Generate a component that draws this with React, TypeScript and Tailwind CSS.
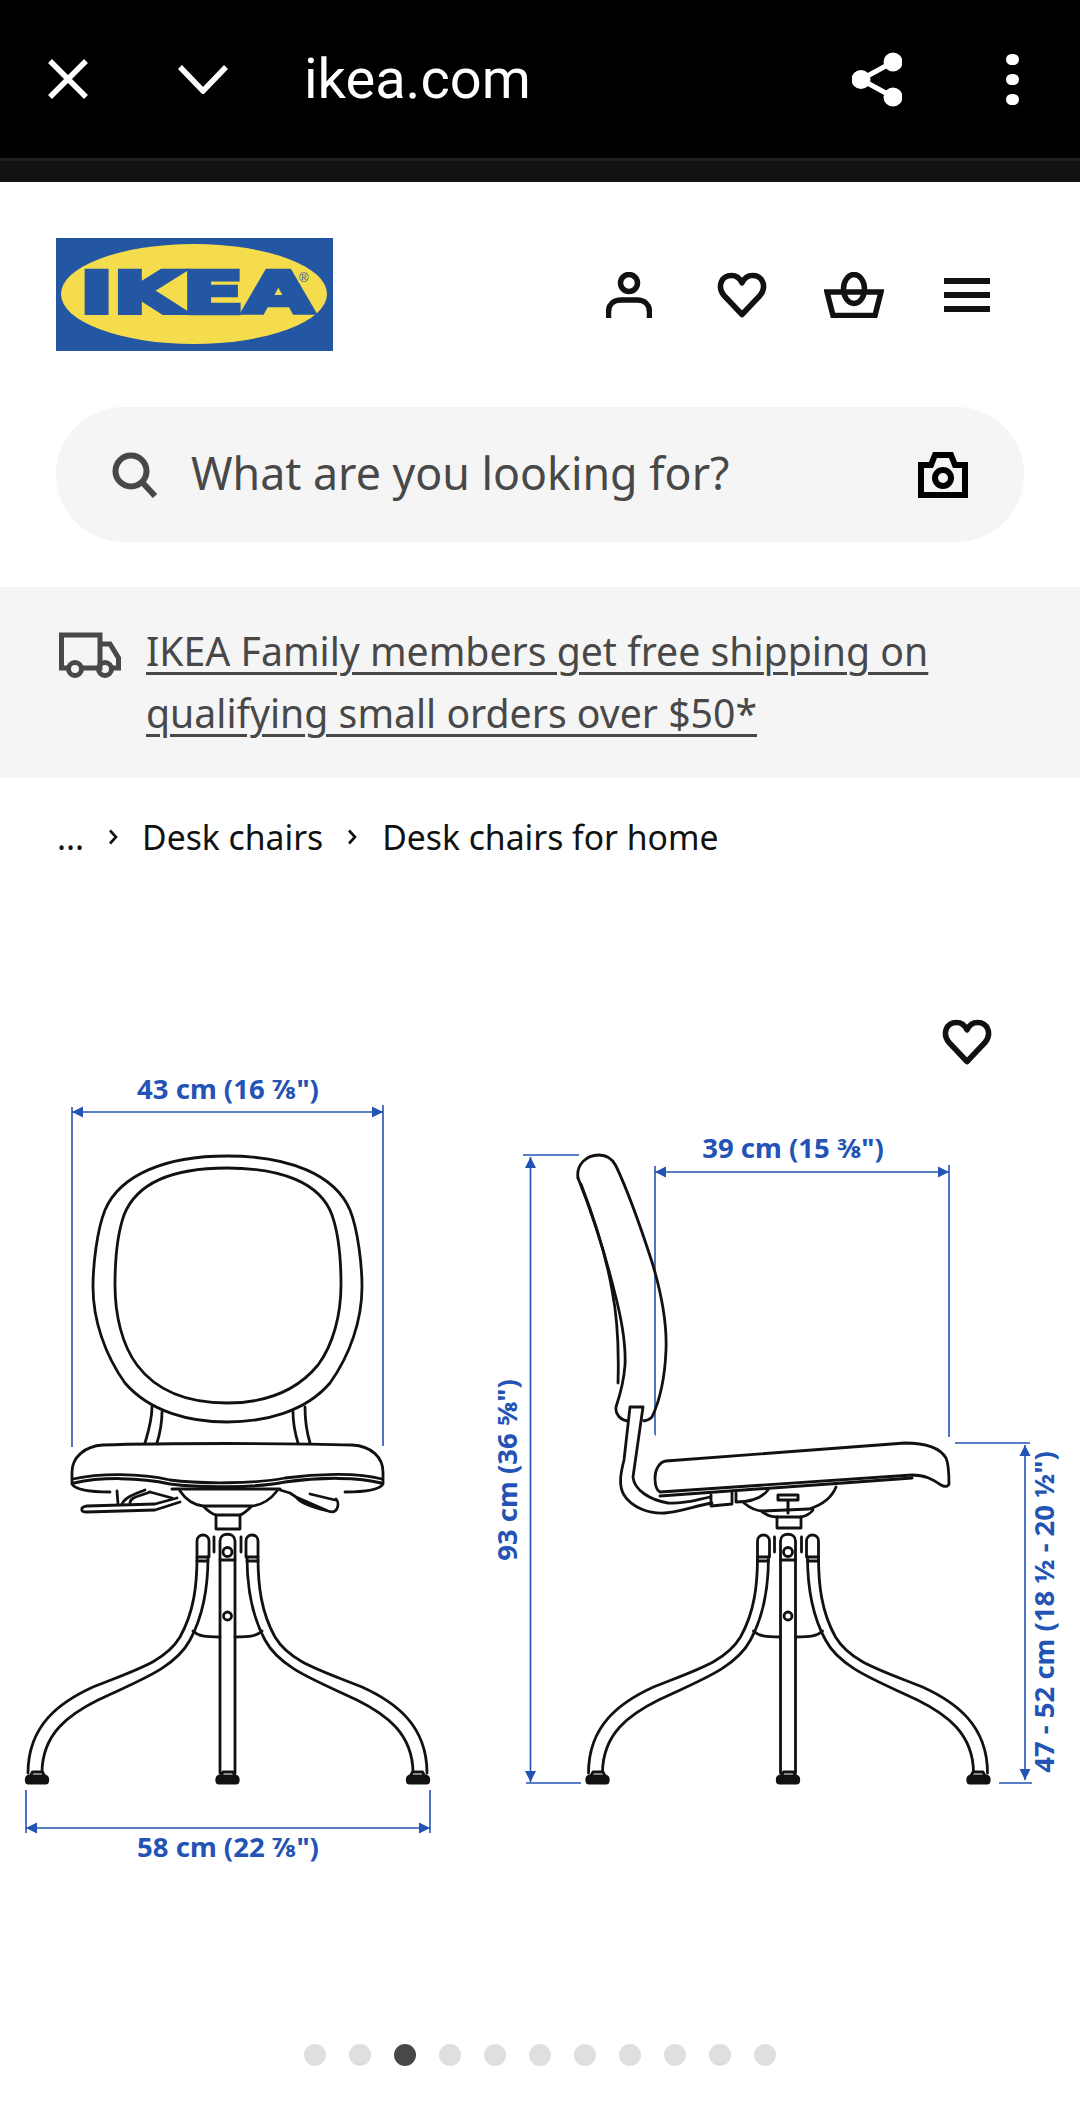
import React from 'react';

const BLUE = '#2353b5';
const INK = '#111111';

const HeartIcon: React.FC<{ className?: string }> = ({ className }) => (
  <svg viewBox="0 0 50 46" className={className} fill="none" stroke={INK} strokeWidth="5.5" strokeLinejoin="round">
    <path d="M25 42.5 L7 23.5 C0 15 4 3.5 14.5 3.5 C19.5 3.5 23 6.5 25 11 C27 6.5 30.5 3.5 35.5 3.5 C46 3.5 50 15 43 23.5 Z" />
  </svg>
);

const Dim: React.FC<{ x1: number; y1: number; x2: number; y2: number }> = ({ x1, y1, x2, y2 }) => (
  <line x1={x1} y1={y1} x2={x2} y2={y2} stroke={BLUE} strokeWidth="1.6" />
);

const ArrowH: React.FC<{ x1: number; x2: number; y: number }> = ({ x1, x2, y }) => (
  <g fill={BLUE}>
    <line x1={x1} y1={y} x2={x2} y2={y} stroke={BLUE} strokeWidth="1.6" />
    <polygon points={`${x1},${y} ${x1 + 11},${y - 5.5} ${x1 + 11},${y + 5.5}`} />
    <polygon points={`${x2},${y} ${x2 - 11},${y - 5.5} ${x2 - 11},${y + 5.5}`} />
  </g>
);

const ArrowV: React.FC<{ x: number; y1: number; y2: number }> = ({ x, y1, y2 }) => (
  <g fill={BLUE}>
    <line x1={x} y1={y1} x2={x} y2={y2} stroke={BLUE} strokeWidth="1.6" />
    <polygon points={`${x},${y1} ${x - 5.5},${y1 + 11} ${x + 5.5},${y1 + 11}`} />
    <polygon points={`${x},${y2} ${x - 5.5},${y2 - 11} ${x + 5.5},${y2 - 11}`} />
  </g>
);

const Label: React.FC<{ x: number; y: number; rotate?: boolean; children: React.ReactNode }> = ({ x, y, rotate, children }) => (
  <text
    x={x}
    y={y}
    fill={BLUE}
    textAnchor="middle"
    transform={rotate ? `rotate(-90 ${x} ${y})` : undefined}
    className="font-['Noto_Sans'] text-[27.5px] font-bold"
  >
    {children}
  </text>
);

const Foot: React.FC<{ x: number }> = ({ x }) => (
  <g>
    <path d={`M${x + 5} 1776 L${x + 7} 1772 L${x + 17} 1772 L${x + 19} 1776`} fill="#ffffff" />
    <path d={`M${x + 3} 1776 L${x + 20} 1776 C${x + 23} 1777 ${x + 23} 1783 ${x + 20} 1783 L${x + 3} 1783 C${x} 1783 ${x} 1777 ${x + 3} 1776 Z`} fill={INK} />
  </g>
);

// one leg, drawn on the left, the right one is the mirror image
const Leg = () => (
  <g>
    <path d="M197 1541 C197 1533 209 1533 209 1541 L209 1557 L197 1557 Z" />
    <path d="M197 1557 C197 1585 194 1612 180 1637 C165 1662 135 1670 93 1687 C60 1702 28 1725 28 1773" />
    <path d="M208 1557 C208 1590 202 1618 190 1640 C175 1668 140 1680 98 1700 C70 1714 42 1733 42 1773" />
    <line x1="197" y1="1561" x2="208" y2="1561" />
    <Foot x={25.5} />
  </g>
);

const Base: React.FC<{ dx: number }> = ({ dx }) => (
  <g transform={`translate(${dx} 0)`}>
    <Leg />
    <g transform="matrix(-1 0 0 1 455 0)">
      <Leg />
    </g>
    <path d="M220 1773 L220 1541 C220 1532 235 1532 235 1541 L235 1773" />
    <line x1="220" y1="1560" x2="235" y2="1560" />
    <line x1="214" y1="1537" x2="214" y2="1552" />
    <line x1="241" y1="1537" x2="241" y2="1552" />
    <circle cx="227.5" cy="1552" r="4.5" />
    <circle cx="227.5" cy="1616" r="4" />
    <path d="M193 1631 C198 1636 205 1637 220 1637 M235 1637 C250 1637 257 1636 262 1631" />
    <Foot x={216} />
  </g>
);

const ChairDrawing = () => (
  <svg viewBox="0 1000 1080 900" className="block h-[900px] w-[1080px]">
    {/* front view */}
    <g fill="none" stroke={INK} strokeWidth="2.8" strokeLinecap="round" strokeLinejoin="round">
      <path d="M227 1156 C290 1156 335 1175 350 1210 C358 1230 362 1265 362 1287 C362 1320 350 1355 330 1383 C305 1412 265 1422 227 1422 C190 1422 150 1412 125 1383 C105 1355 93 1320 93 1287 C93 1265 97 1230 105 1210 C120 1175 165 1156 227 1156 Z" />
      <path d="M227 1168 C280 1168 320 1182 332 1215 C339 1235 341 1262 341 1285 C341 1315 333 1345 318 1365 C295 1393 262 1403 227 1403 C192 1403 158 1393 137 1365 C122 1345 115 1315 115 1285 C115 1262 117 1235 124 1215 C137 1182 175 1168 227 1168 Z" />
      <path d="M152 1407 C152 1420 148 1433 145 1443 M162 1412 C162 1423 160 1433 157 1443 M293 1412 C293 1423 295 1433 298 1443 M305 1407 C305 1420 307 1433 310 1443" />
      <path d="M103 1445 C160 1443 295 1443 352 1445 C372 1446 383 1458 383 1472 L383 1484 C380 1489 370 1492 345 1492 M103 1445 C84 1446 72 1458 72 1472 L72 1484 C75 1489 85 1492 110 1492" />
      <path d="M73 1479 C100 1473 140 1473 170 1480 C200 1484 255 1484 285 1478 C320 1473 360 1473 382 1479" />
      <path d="M74 1483 C100 1477 140 1477 170 1484 C200 1488 255 1488 285 1482 C320 1477 360 1477 381 1483" strokeWidth="3" />
      <path d="M180 1491 C186 1500 195 1505 203 1506 M277 1491 C270 1500 262 1505 252 1506 M203 1506 L252 1506 M203 1506 C208 1511 212 1514 216 1515 M252 1506 C247 1511 243 1514 240 1515" />
      <path d="M216 1515 L216 1529 L240 1529 L240 1515 Z" />
      <path d="M177 1498 L155 1504 L87 1506 C80 1507 80 1512 87 1512 L155 1510 L180 1502" />
      <path d="M117 1491 L118 1504 M130 1503 C130 1497 140 1496 150 1492 M122 1504 C125 1497 135 1494 145 1490 M150 1492 L172 1498" />
      <path d="M290 1493 L296 1497 L328 1511 C338 1515 340 1503 336 1499 M310 1494 L335 1500 M296 1497 C300 1503 315 1508 328 1511 M280 1490 L290 1493" />
      <path d="M172 1489 L280 1489" strokeWidth="3" />
    </g>
    <Dim x1={72} y1={1107} x2={72} y2={1447} />
    <Dim x1={383} y1={1105} x2={383} y2={1446} />
    <ArrowH x1={72} x2={383} y={1112} />
    <Label x={228} y={1099}>43 cm (16 ⅞")</Label>
    <Dim x1={26} y1={1790} x2={26} y2={1833} />
    <Dim x1={430} y1={1790} x2={430} y2={1833} />
    <ArrowH x1={26} x2={430} y={1828} />
    <Label x={228} y={1857}>58 cm (22 ⅞")</Label>

    {/* side view */}
    <Dim x1={655} y1={1166} x2={655} y2={1453} />
    <Dim x1={949} y1={1165} x2={949} y2={1437} />
    <ArrowH x1={655} x2={949} y={1172} />
    <Label x={793} y={1158}>39 cm (15 ⅜")</Label>
    <Dim x1={523} y1={1155} x2={579} y2={1155} />
    <Dim x1={526} y1={1783} x2={581} y2={1783} />
    <ArrowV x={530.5} y1={1157} y2={1782} />
    <Label x={517} y={1470} rotate>93 cm (36 ⅝")</Label>
    <Dim x1={955} y1={1443} x2={1030} y2={1443} />
    <Dim x1={999} y1={1783} x2={1032} y2={1783} />
    <ArrowV x={1025} y1={1445} y2={1780} />
    <Label x={1054} y={1612} rotate>47 - 52 cm (18 ½ - 20 ½")</Label>
    <g fill="none" stroke={INK} strokeWidth="2.8" strokeLinecap="round" strokeLinejoin="round">
      <path d="M578 1178 C576 1165 586 1155 599 1155 C607 1155 612 1158 616 1166 C625 1185 640 1225 652 1262 C662 1295 667 1325 666 1350 C665 1375 660 1400 652 1417 C649 1420 645 1421 642 1421" />
      <path d="M578 1178 C590 1208 604 1250 614 1290 C622 1320 626 1345 625 1365 C624 1380 620 1395 616 1407 C615 1414 620 1420 628 1421" />
      <path d="M581 1184 C594 1218 606 1255 612 1290 C618 1320 619 1350 618 1383" />
      <path d="M630 1407 L643 1407 L633 1477 C634 1490 650 1500 668 1503 C685 1504 695 1500 710 1497 M630 1407 L624 1460 C621 1472 618 1485 624 1495 C632 1508 650 1514 665 1513 C680 1512 695 1506 712 1503" fill="#ffffff" />
      <path d="M666 1461 L905 1443 C925 1443 940 1448 946 1458 C949 1465 949 1475 949 1484 C948 1487 944 1487 941 1485 C932 1479 925 1475 912 1475 L660 1492 C656 1490 655 1484 655 1478 C655 1470 659 1462 666 1461 Z" fill="#ffffff" />
      <path d="M660 1496 L843 1483 L912 1478" strokeWidth="3" />
      <path d="M711 1495 L711 1506 L732 1504 L732 1493 M736 1493 L736 1502 C750 1502 762 1498 768 1490 M744 1503 C750 1508 757 1511 763 1511 L809 1509 C822 1505 832 1497 836 1487 M761 1511 C766 1515 772 1517 777 1517 L801 1517 C806 1516 810 1514 813 1510" />
      <path d="M777 1517 L777 1528 L801 1528 L801 1517" />
      <path d="M778 1495 L798 1495 L798 1500 L778 1500 Z M788 1500 L788 1513" strokeWidth="3" />
      <Base dx={560.5} />
      <Base dx={0} />
    </g>
  </svg>
);

export default function App() {
  const dots = [0, 1, 2, 3, 4, 5, 6, 7, 8, 9, 10];

  return (
    <div className="min-h-[2121px] w-[1080px] overflow-hidden bg-white font-['Noto_Sans',sans-serif]">
      {/* browser bar */}
      <div className="flex h-[158px] items-center bg-black pl-[47px] pr-[61px]">
        <svg viewBox="0 0 42 40" className="h-[40px] w-[42px]" stroke="#ffffff" strokeWidth="5.5" fill="none">
          <path d="M3 2 L39 38 M39 2 L3 38" />
        </svg>
        <svg viewBox="0 0 50 30" className="ml-[89px] h-[30px] w-[50px]" stroke="#ffffff" strokeWidth="5.5" fill="none">
          <path d="M2 3 L25 27 L48 3" />
        </svg>
        <span className="ml-[76px] font-['Roboto'] text-[56px] leading-none text-white">ikea.com</span>
        <svg viewBox="0 0 50 55" className="ml-auto h-[55px] w-[50px]" fill="#ffffff" stroke="#ffffff" strokeWidth="5">
          <path d="M41 10 L9 27.5 L41 45" fill="none" />
          <circle cx="41" cy="10" r="7" />
          <circle cx="9" cy="27.5" r="7" />
          <circle cx="41" cy="45" r="7" />
        </svg>
        <div className="ml-[104px] flex flex-col gap-[9px]">
          <span className="block h-[11px] w-[13px] rounded-full bg-white" />
          <span className="block h-[11px] w-[13px] rounded-full bg-white" />
          <span className="block h-[11px] w-[13px] rounded-full bg-white" />
        </div>
      </div>
      <div className="h-[3px] bg-[#202020]" />
      <div className="h-[21px] bg-[#121212]" />

      {/* logo and account icons */}
      <div className="flex h-[225px] items-start px-[56px] pt-[56px]">
        <svg viewBox="0 0 277 113" className="h-[113px] w-[277px]">
          <rect width="277" height="113" fill="#2457a3" />
          <ellipse cx="138" cy="56" rx="133" ry="50" fill="#f5dc4c" />
          <text
            x="24"
            y="75"
            fill="#2457a3"
            stroke="#2457a3"
            strokeWidth="4.5"
            textLength="233"
            lengthAdjust="spacingAndGlyphs"
            className="font-['DejaVu_Sans'] text-[57px] font-bold"
          >
            IKEA
          </text>
          <text x="243" y="44" fill="#2457a3" className="font-['Liberation_Sans'] text-[13px]">®</text>
        </svg>
        <div className="ml-[273px] mt-[34px] flex items-center">
          <svg viewBox="0 0 46 46" className="h-[46px] w-[46px]" fill="none" stroke={INK} strokeWidth="5.5">
            <circle cx="23" cy="11" r="8.5" />
            <path d="M2.5 46 L2.5 40 C2.5 32 8 28 15 28 L31 28 C38 28 43.5 32 43.5 40 L43.5 46" />
          </svg>
          <HeartIcon className="ml-[65px] h-[46px] w-[50px]" />
          <svg viewBox="0 0 60 46" className="ml-[57px] h-[46px] w-[60px]" fill="none" stroke={INK} strokeWidth="5.5">
            <path d="M3 20 L57 20 L51 43.5 L9 43.5 Z" />
            <ellipse cx="30" cy="17" rx="10.5" ry="14.5" />
          </svg>
          <div className="ml-[60px] flex w-[46px] flex-col gap-[8px]">
            <span className="block h-[6px] bg-[#111111]" />
            <span className="block h-[6px] bg-[#111111]" />
            <span className="block h-[6px] bg-[#111111]" />
          </div>
        </div>
      </div>

      {/* search */}
      <div className="mx-[56px] flex h-[135px] items-center rounded-full bg-[#f5f5f5] pl-[56px] pr-[53px]">
        <svg viewBox="0 0 46 46" className="h-[46px] w-[46px]" fill="none" stroke="#484848" strokeWidth="6">
          <circle cx="19" cy="19" r="15.5" />
          <path d="M30 30 L43 44" />
        </svg>
        <span className="ml-[33px] pb-[2px] text-[44.7px] leading-none text-[#484848]">What are you looking for?</span>
        <svg viewBox="0 0 50 46" className="ml-auto mr-[3px] h-[46px] w-[50px]" fill="none" stroke="#000000" strokeWidth="6">
          <path d="M3 13 L13 13 L17 3 L33 3 L37 13 L47 13 L47 43 L3 43 Z" strokeLinejoin="miter" />
          <circle cx="25" cy="26" r="8" />
        </svg>
      </div>

      {/* shipping banner */}
      <div className="mt-[45px] flex h-[191px] items-start bg-[#f5f5f5] pl-[59px] pr-[56px] pt-[33px]">
        <svg viewBox="0 0 62 46" className="mt-[12px] h-[46px] w-[62px]" fill="none" stroke="#484848" strokeWidth="5">
          <path d="M8 36 L2.5 36 L2.5 3 L41 3 L41 36 L24 36 M41 12 L51 12 L59.5 26 L59.5 36 L54 36 M41 36 L37 36" />
          <circle cx="16" cy="37" r="6.5" />
          <circle cx="46" cy="37" r="6.5" />
        </svg>
        <a className="ml-[25px] text-[39.2px] leading-[62px] text-[#484848] underline decoration-[2.5px] underline-offset-[6px]">
          IKEA Family members get free shipping on
          <br />
          qualifying small orders over $50*
        </a>
      </div>

      {/* breadcrumb */}
      <div className="flex h-[120px] items-center pb-[2px] pl-[57px] text-[33.7px] text-[#111111]">
        <span>...</span>
        <svg viewBox="0 0 10 16" className="ml-[24px] h-[18px] w-[10px]" fill="none" stroke="#111111" strokeWidth="2.6">
          <path d="M2 1.5 L8 8 L2 14.5" />
        </svg>
        <span className="ml-[24px]">Desk chairs</span>
        <svg viewBox="0 0 10 16" className="ml-[24px] h-[18px] w-[10px]" fill="none" stroke="#111111" strokeWidth="2.6">
          <path d="M2 1.5 L8 8 L2 14.5" />
        </svg>
        <span className="ml-[25px]">Desk chairs for home</span>
      </div>

      {/* gallery */}
      <div className="relative mt-[102px]">
        <ChairDrawing />
        <HeartIcon className="absolute left-[942px] top-[19px] h-[46px] w-[50px]" />
      </div>

      <div className="mt-[144px] flex justify-center gap-[23px]">
        {dots.map((d) => (
          <span key={d} className={d === 2 ? 'block h-[22px] w-[22px] rounded-full bg-[#484848]' : 'block h-[22px] w-[22px] rounded-full bg-[#dfdfdf]'} />
        ))}
      </div>
    </div>
  );
}
